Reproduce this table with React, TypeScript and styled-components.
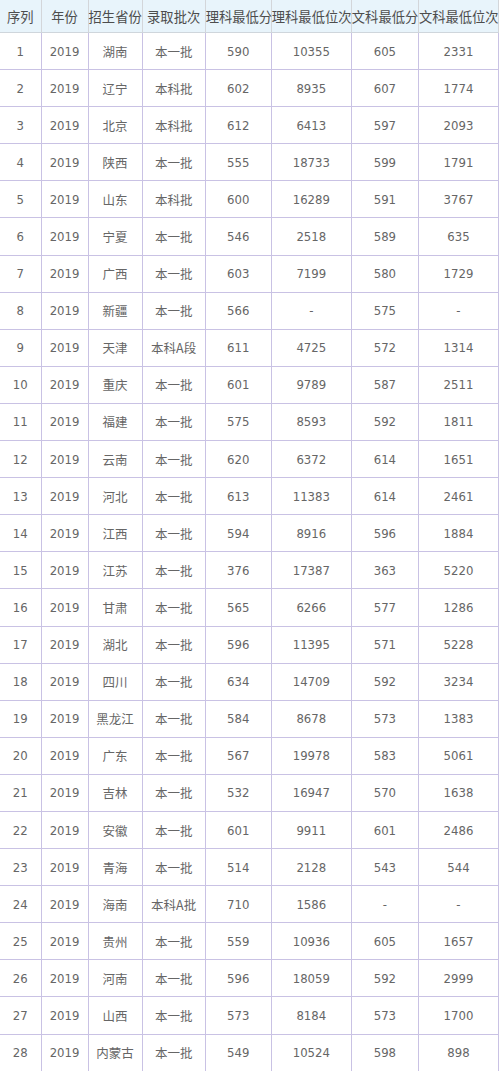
import { createGlobalStyle } from "styled-components";
import styled from "styled-components";

const GlobalStyle = createGlobalStyle`
  html, body {
    margin: 0;
    padding: 0;
    background: #fff;
  }
  body {
    font-family: "DejaVu Sans Condensed", "Liberation Sans", "Noto Sans CJK SC", sans-serif;
  }
`;

const Table = styled.table`
  width: 499px;
  table-layout: fixed;
  border-collapse: collapse;
  border-spacing: 0;
`;

const HeadCell = styled.th`
  height: 32px;
  padding: 0;
  background: #e8f4fb;
  color: #4d4d4d;
  font-family: "Noto Sans CJK SC", sans-serif;
  font-size: 13.3px;
  font-weight: normal;
  text-align: center;
  white-space: nowrap;
  overflow: visible;
  border-right: 1px solid #d3d6da;
  border-bottom: 1px solid #cfd6dc;
`;

const Row = styled.tr`
  height: 37.1px;
`;

const Cell = styled.td<{ $cjk?: boolean }>`
  padding: 0;
  color: #666;
  font-family: ${(p) =>
    p.$cjk
      ? `"Noto Sans CJK SC", sans-serif`
      : `"DejaVu Sans Condensed", "Liberation Sans", sans-serif`};
  font-size: ${(p) => (p.$cjk ? "12.5px" : "13px")};
  text-align: center;
  white-space: nowrap;
  border-right: 1px solid #c9c2e4;
  border-bottom: 1px solid #c9c2e4;
`;

const widths = [41, 47, 54, 63, 66, 80, 67, 80];

const headers = [
  "序列",
  "年份",
  "招生省份",
  "录取批次",
  "理科最低分",
  "理科最低位次",
  "文科最低分",
  "文科最低位次",
];

type Entry = [string, string, string, string, string, string];

const rows: Entry[] = [
  ["湖南", "本一批", "590", "10355", "605", "2331"],
  ["辽宁", "本科批", "602", "8935", "607", "1774"],
  ["北京", "本科批", "612", "6413", "597", "2093"],
  ["陕西", "本一批", "555", "18733", "599", "1791"],
  ["山东", "本科批", "600", "16289", "591", "3767"],
  ["宁夏", "本一批", "546", "2518", "589", "635"],
  ["广西", "本一批", "603", "7199", "580", "1729"],
  ["新疆", "本一批", "566", "-", "575", "-"],
  ["天津", "本科A段", "611", "4725", "572", "1314"],
  ["重庆", "本一批", "601", "9789", "587", "2511"],
  ["福建", "本一批", "575", "8593", "592", "1811"],
  ["云南", "本一批", "620", "6372", "614", "1651"],
  ["河北", "本一批", "613", "11383", "614", "2461"],
  ["江西", "本一批", "594", "8916", "596", "1884"],
  ["江苏", "本一批", "376", "17387", "363", "5220"],
  ["甘肃", "本一批", "565", "6266", "577", "1286"],
  ["湖北", "本一批", "596", "11395", "571", "5228"],
  ["四川", "本一批", "634", "14709", "592", "3234"],
  ["黑龙江", "本一批", "584", "8678", "573", "1383"],
  ["广东", "本一批", "567", "19978", "583", "5061"],
  ["吉林", "本一批", "532", "16947", "570", "1638"],
  ["安徽", "本一批", "601", "9911", "601", "2486"],
  ["青海", "本一批", "514", "2128", "543", "544"],
  ["海南", "本科A批", "710", "1586", "-", "-"],
  ["贵州", "本一批", "559", "10936", "605", "1657"],
  ["河南", "本一批", "596", "18059", "592", "2999"],
  ["山西", "本一批", "573", "8184", "573", "1700"],
  ["内蒙古", "本一批", "549", "10524", "598", "898"],
];

const App = () => {
  return (
    <>
      <GlobalStyle />
      <Table>
        <colgroup>
          {widths.map((w, i) => (
            <col key={i} style={{ width: w }} />
          ))}
        </colgroup>
        <thead>
          <tr>
            {headers.map((h) => (
              <HeadCell key={h}>{h}</HeadCell>
            ))}
          </tr>
        </thead>
        <tbody>
          {rows.map((r, i) => (
            <Row key={i}>
              <Cell>{i + 1}</Cell>
              <Cell>2019</Cell>
              <Cell $cjk>{r[0]}</Cell>
              <Cell $cjk>{r[1]}</Cell>
              <Cell>{r[2]}</Cell>
              <Cell>{r[3]}</Cell>
              <Cell>{r[4]}</Cell>
              <Cell>{r[5]}</Cell>
            </Row>
          ))}
        </tbody>
      </Table>
    </>
  );
};

export default App;
